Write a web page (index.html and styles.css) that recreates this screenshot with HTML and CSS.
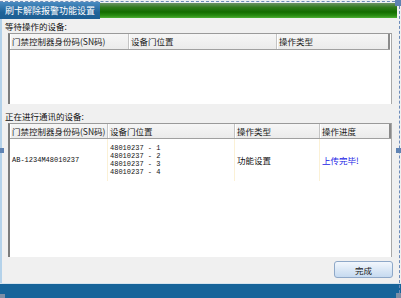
FILE: index.html
```html
<!DOCTYPE html>
<html lang="zh-CN">
<head>
  <meta charset="UTF-8">
  <title>刷卡解除报警功能设置</title>
  <link rel="stylesheet" href="styles.css">
</head>
<body>
  <div class="window">
    <div class="titlebar">
      <div class="tab">刷卡解除报警功能设置</div>
      <div class="greenBar"></div>
    </div>

    <div class="content">
      <div class="caption">等待操作的设备:</div>
      <div class="listView waitList">
        <div class="header cols3">
          <div class="hcell">门禁控制器身份码(SN码)</div>
          <div class="hcell">设备门位置</div>
          <div class="hcell last">操作类型</div>
        </div>
      </div>

      <div class="caption second">正在进行通讯的设备:</div>
      <div class="listView runList">
        <div class="header cols4">
          <div class="hcell">门禁控制器身份码(SN码)</div>
          <div class="hcell">设备门位置</div>
          <div class="hcell">操作类型</div>
          <div class="hcell last">操作进度</div>
        </div>
        <div class="row cols4">
          <div class="cell mono">AB-1234M48010237</div>
          <div class="cell mono doors">
            <span>48010237 - 1</span>
            <span>48010237 - 2</span>
            <span>48010237 - 3</span>
            <span>48010237 - 4</span>
          </div>
          <div class="cell">功能设置</div>
          <div class="cell done">上传完毕!</div>
        </div>
      </div>

      <div class="footer">
        <button class="btn">完成</button>
      </div>
    </div>

    <div class="statusBar"></div>

    <!-- designer selection frame -->
    <div class="selFrame"></div>
    <div class="handle h-tr"></div>
    <div class="handle h-ml"></div>
    <div class="handle h-mr"></div>
    <div class="handle h-bl"></div>
    <div class="handle h-br"></div>
  </div>
</body>
</html>
```

FILE: styles.css
```css
* {
  margin: 0;
  padding: 0;
  box-sizing: border-box;
}
body {
  background: #f0f0f0;
  font-family: "Noto Sans CJK SC", "Noto Sans", sans-serif;
}
.window {
  position: relative;
  width: 401px;
  height: 298px;
  overflow: hidden;
  background: #eef0f2;
}
.titlebar {
  display: flex;
  height: 19px;
  padding-top: 2px;
}
.tab {
  width: 100px;
  height: 17px;
  background: linear-gradient(#4a8cc2, #1f6399 60%, #1c5e93);
  color: #fff;
  font-size: 9px;
  line-height: 17px;
  padding-left: 5px;
  white-space: nowrap;
}
.greenBar {
  flex: 1;
  margin-top: 1px;
  margin-right: 4px;
  height: 15px;
  background: linear-gradient(#6b9466, #2f7a1c 30%, #126d00 60%, #2a8e14 85%, #4fb036);
}
.content {
  height: 264px;
  background: #f0f0f0;
  border-left: 2px solid #b4d2ea;
  padding: 2px 0 0 0;
  display: flex;
  flex-direction: column;
}
.caption {
  font-size: 8.5px;
  line-height: 11px;
  padding-left: 3px;
  color: #111;
}
.caption.second {
  margin-top: 7px;
}
.listView {
  margin-left: 6px;
  width: 384px;
  background: #fff;
  border-left: 2px solid #7c7c7c;
  border-top: 1px solid #9a9a9a;
  border-right: 1px solid #a8a8a8;
}
.waitList {
  margin-top: 1px;
  height: 71px;
}
.runList {
  margin-top: 1px;
  height: 134px;
}
.header {
  display: grid;
  background: linear-gradient(#f6f6f6, #ebebeb);
  border-bottom: 1px solid #a0a0a0;
}
.waitList .header {
  height: 16px;
  width: 380px;
}
.runList .header {
  height: 15px;
}
.cols3 {
  grid-template-columns: 119px 148px 113px;
}
.cols4 {
  grid-template-columns: 98px 127px 85px 71px;
}
.hcell {
  font-size: 8.5px;
  line-height: 15px;
  padding-left: 2px;
  color: #1a1a1a;
  white-space: nowrap;
  overflow: hidden;
  border-right: 1px solid #c4c4c4;
  box-shadow: inset 1px 0 0 #fff;
}
.hcell.last {
  border-right: 2px solid #8a8a8a;
}
.row {
  display: grid;
  height: 42px;
}
.cell {
  display: flex;
  align-items: center;
  padding-left: 2px;
  font-size: 8.5px;
  color: #111;
  border-right: 1px solid #fbf1d6;
  white-space: nowrap;
}
.cell:last-child {
  border-right: none;
}
.mono {
  font-family: "Liberation Mono", monospace;
  font-size: 7px;
}
.doors {
  flex-direction: column;
  align-items: flex-start;
  justify-content: center;
  line-height: 8.2px;
}
.done {
  color: #1a1ae6;
}
.footer {
  display: flex;
  justify-content: flex-end;
  padding: 4px 8px 0 0;
}
.btn {
  width: 59px;
  height: 17px;
  border: 1px solid #8ea8c8;
  border-radius: 3px;
  background: linear-gradient(#f2f7fd, #dbe8f6 50%, #c6daf0);
  font-family: "Noto Sans CJK SC", sans-serif;
  font-size: 8.5px;
  color: #1a1a1a;
}
.statusBar {
  height: 15px;
  border-top: 1px solid #d6e4ee;
  background: #17649a;
}
.selFrame {
  position: absolute;
  top: 1px;
  left: 0;
  right: 1px;
  bottom: 0;
  border-top: 1px dashed #6c8cba;
  border-right: 1px dashed #6c8cba;
  pointer-events: none;
}
.handle {
  position: absolute;
  width: 5px;
  height: 5px;
  background: #5f83b3;
}
.h-tr { top: 0; right: 0; width: 6px; height: 6px; }
.h-ml { top: 148px; left: 0; width: 4px; }
.h-mr { top: 148px; right: 0; }
.h-bl { bottom: 0; left: 0; height: 4px; background: #7c8ea6; }
.h-br { bottom: 0; right: 0; background: #7c8ea6; }
```
